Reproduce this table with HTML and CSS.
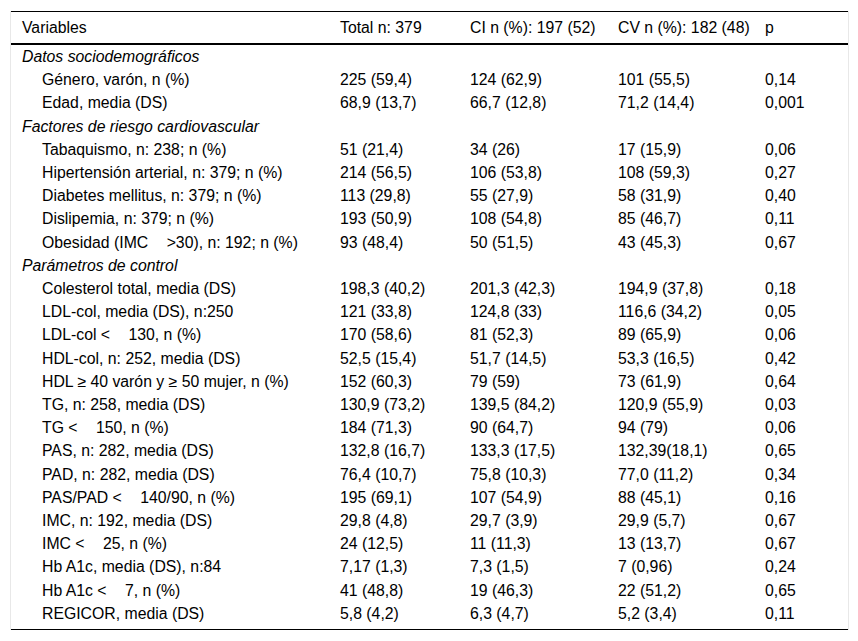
FILE: index.html
```
<!DOCTYPE html>
<html lang="es">
<head>
<meta charset="utf-8">
<title>Tabla</title>
<link rel="stylesheet" href="styles.css">
</head>
<body>
<div class="table-wrap">
<table class="data">
<colgroup>
<col class="c1"><col class="c2"><col class="c3"><col class="c4"><col class="c5">
</colgroup>
<thead>
<tr><th>Variables</th><th>Total n: 379</th><th>CI n (%): 197 (52)</th><th>CV n (%): 182 (48)</th><th>p</th></tr>
</thead>
<tbody>
<tr class="section"><td colspan="5">Datos sociodemográficos</td></tr>
<tr><td class="ind">Género, varón, n (%)</td><td>225 (59,4)</td><td>124 (62,9)</td><td>101 (55,5)</td><td>0,14</td></tr>
<tr><td class="ind">Edad, media (DS)</td><td>68,9 (13,7)</td><td>66,7 (12,8)</td><td>71,2 (14,4)</td><td>0,001</td></tr>
<tr class="section"><td colspan="5">Factores de riesgo cardiovascular</td></tr>
<tr><td class="ind">Tabaquismo, n: 238; n (%)</td><td>51 (21,4)</td><td>34 (26)</td><td>17 (15,9)</td><td>0,06</td></tr>
<tr><td class="ind">Hipertensión arterial, n: 379; n (%)</td><td>214 (56,5)</td><td>106 (53,8)</td><td>108 (59,3)</td><td>0,27</td></tr>
<tr><td class="ind">Diabetes mellitus, n: 379; n (%)</td><td>113 (29,8)</td><td>55 (27,9)</td><td>58 (31,9)</td><td>0,40</td></tr>
<tr><td class="ind">Dislipemia, n: 379; n (%)</td><td>193 (50,9)</td><td>108 (54,8)</td><td>85 (46,7)</td><td>0,11</td></tr>
<tr><td class="ind">Obesidad (IMC <span class="gap"></span>&gt;30), n: 192; n (%)</td><td>93 (48,4)</td><td>50 (51,5)</td><td>43 (45,3)</td><td>0,67</td></tr>
<tr class="section"><td colspan="5">Parámetros de control</td></tr>
<tr><td class="ind">Colesterol total, media (DS)</td><td>198,3 (40,2)</td><td>201,3 (42,3)</td><td>194,9 (37,8)</td><td>0,18</td></tr>
<tr><td class="ind">LDL-col, media (DS), n:250</td><td>121 (33,8)</td><td>124,8 (33)</td><td>116,6 (34,2)</td><td>0,05</td></tr>
<tr><td class="ind">LDL-col &lt; <span class="gap"></span>130, n (%)</td><td>170 (58,6)</td><td>81 (52,3)</td><td>89 (65,9)</td><td>0,06</td></tr>
<tr><td class="ind">HDL-col, n: 252, media (DS)</td><td>52,5 (15,4)</td><td>51,7 (14,5)</td><td>53,3 (16,5)</td><td>0,42</td></tr>
<tr><td class="ind">HDL ≥ 40 varón y ≥ 50 mujer, n (%)</td><td>152 (60,3)</td><td>79 (59)</td><td>73 (61,9)</td><td>0,64</td></tr>
<tr><td class="ind">TG, n: 258, media (DS)</td><td>130,9 (73,2)</td><td>139,5 (84,2)</td><td>120,9 (55,9)</td><td>0,03</td></tr>
<tr><td class="ind">TG &lt; <span class="gap"></span>150, n (%)</td><td>184 (71,3)</td><td>90 (64,7)</td><td>94 (79)</td><td>0,06</td></tr>
<tr><td class="ind">PAS, n: 282, media (DS)</td><td>132,8 (16,7)</td><td>133,3 (17,5)</td><td>132,39(18,1)</td><td>0,65</td></tr>
<tr><td class="ind">PAD, n: 282, media (DS)</td><td>76,4 (10,7)</td><td>75,8 (10,3)</td><td>77,0 (11,2)</td><td>0,34</td></tr>
<tr><td class="ind">PAS/PAD &lt; <span class="gap"></span>140/90, n (%)</td><td>195 (69,1)</td><td>107 (54,9)</td><td>88 (45,1)</td><td>0,16</td></tr>
<tr><td class="ind">IMC, n: 192, media (DS)</td><td>29,8 (4,8)</td><td>29,7 (3,9)</td><td>29,9 (5,7)</td><td>0,67</td></tr>
<tr><td class="ind">IMC &lt; <span class="gap"></span>25, n (%)</td><td>24 (12,5)</td><td>11 (11,3)</td><td>13 (13,7)</td><td>0,67</td></tr>
<tr><td class="ind">Hb A1c, media (DS), n:84</td><td>7,17 (1,3)</td><td>7,3 (1,5)</td><td>7 (0,96)</td><td>0,24</td></tr>
<tr><td class="ind">Hb A1c &lt; <span class="gap"></span>7, n (%)</td><td>41 (48,8)</td><td>19 (46,3)</td><td>22 (51,2)</td><td>0,65</td></tr>
<tr class="last"><td class="ind">REGICOR, media (DS)</td><td>5,8 (4,2)</td><td>6,3 (4,7)</td><td>5,2 (3,4)</td><td>0,11</td></tr>
</tbody>
</table>
</div>
</body>
</html>
```
FILE: styles.css
```
html, body {
  margin: 0;
  padding: 0;
  background: #fff;
}
body {
  font-family: "Liberation Sans", Arial, sans-serif;
  font-size: 15.8px;
  color: #000;
}
.table-wrap {
  margin: 11px 9px 0 10px;
  border-left: 1px solid #e8e8e8;
  border-right: 1px solid #e8e8e8;
}
.data {
  width: 100%;
  border-collapse: collapse;
  table-layout: fixed;
  border-top: 1px solid #000;
  border-bottom: 1px solid #000;
}
.c1 { width: 318px; }
.c2 { width: 130px; }
.c3 { width: 148px; }
.c4 { width: 147px; }
.c5 { width: auto; }
.data th {
  font-weight: normal;
  text-align: left;
  line-height: 23px;
  padding: 4px 11px 4px 11px;
  border-bottom: 2px solid #000;
  white-space: nowrap;
}
.data td {
  line-height: 23.2px;
  padding: 0 11px;
  white-space: nowrap;
  vertical-align: middle;
}
.data tr.last td {
  padding-bottom: 4px;
}
.data td.ind {
  padding-left: 31px;
}
.data tr.section td {
  font-style: italic;
}
.gap {
  display: inline-block;
  width: 14px;
}
```
